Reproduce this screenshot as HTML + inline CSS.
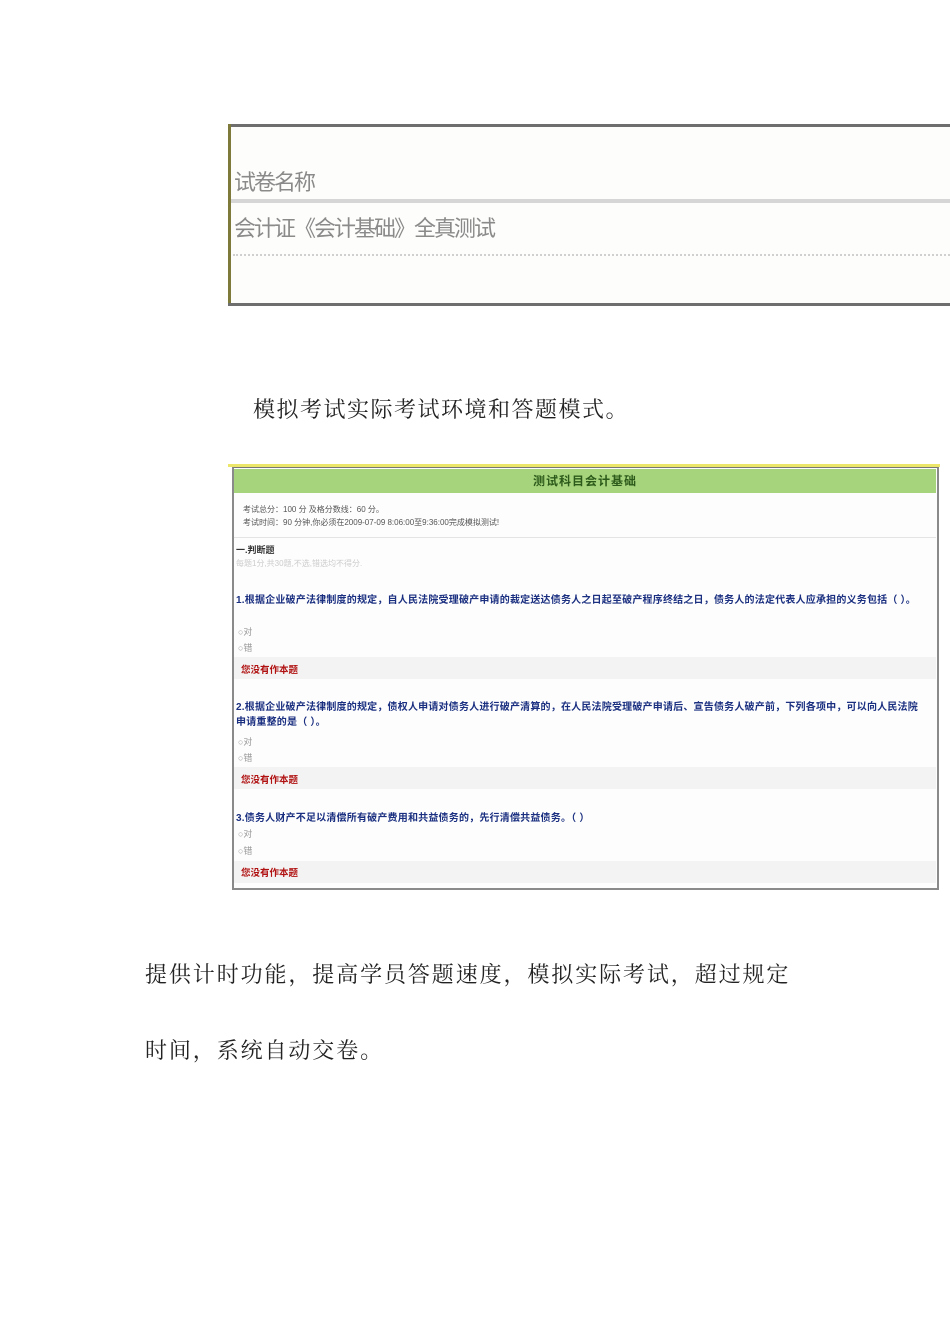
<!DOCTYPE html>
<html><head><meta charset="utf-8"><style>
body{margin:0;width:950px;height:1344px;background:#fff;position:relative;overflow:hidden;font-family:"Liberation Serif","Noto Serif CJK SC",serif;}
.a{position:absolute;white-space:nowrap;}
.s{font-family:"Liberation Sans","Noto Sans CJK SC",sans-serif;}
.q{color:#1a2f80;font-weight:bold;font-size:10px;letter-spacing:0.2px;}
.o{color:#999;font-size:9px;}
.r{color:#b01010;font-weight:bold;font-size:9.5px;}
.band{position:absolute;left:234px;width:702px;height:22px;background:#f3f3f3;}
</style></head><body>
<div class="a" style="left:228px;top:124px;width:722px;height:182px;background:#fdfdfb;"></div>
<div class="a" style="left:228px;top:124px;width:722px;height:3px;background:#6e6e6e;"></div>
<div class="a" style="left:228px;top:124px;width:3px;height:182px;background:#7d7a3a;"></div>
<div class="a" style="left:228px;top:303px;width:722px;height:3px;background:#6e6e6e;"></div>
<div class="a" style="left:231px;top:199px;width:719px;height:4px;background:#d6d6d6;"></div>
<div class="a" style="left:233px;top:254px;width:717px;border-top:2px dotted #d0d0d0;"></div>
<div class="a s" style="left:234px;top:165px;font-size:22px;color:#8a8a8a;letter-spacing:-2px;">试卷名称</div>
<div class="a s" style="left:234px;top:211px;font-size:22px;color:#8a8a8a;letter-spacing:-2px;">会计证《会计基础》全真测试</div>

<div class="a" style="left:253px;top:393px;font-size:22px;color:#222;letter-spacing:1.5px;">模拟考试实际考试环境和答题模式。</div>

<div class="a" style="left:228px;top:464px;width:712px;height:3px;background:#ece66a;"></div>
<div class="a" style="left:232px;top:467px;width:703px;height:420px;border:2px solid #8a8a8a;border-top:1px solid #777;background:#fdfdfd;"></div>
<div class="a s" style="left:234px;top:469px;width:702px;height:24px;background:#a6d47c;text-align:center;line-height:24px;font-size:12px;font-weight:bold;color:#2c5a1a;letter-spacing:1px;">测试科目会计基础</div>
<div class="a s" style="left:243px;top:503px;font-size:8px;color:#555;line-height:13px;">考试总分：100 分 及格分数线：60 分。<br>考试时间：90 分钟,你必须在2009-07-09 8:06:00至9:36:00完成模拟测试!</div>
<div class="a" style="left:234px;top:537px;width:702px;height:1px;background:#e4e4e4;"></div>
<div class="a s" style="left:236px;top:543px;font-size:9px;font-weight:bold;color:#333;">一.判断题</div>
<div class="a s" style="left:236px;top:558px;font-size:8px;color:#ccc;">每题1分,共30题,不选,错选均不得分.</div>
<div class="a s q" style="left:236px;top:591px;">1.根据企业破产法律制度的规定，自人民法院受理破产申请的裁定送达债务人之日起至破产程序终结之日，债务人的法定代表人应承担的义务包括（ ）。</div>
<div class="a s o" style="left:238px;top:625px;">○对</div>
<div class="a s o" style="left:238px;top:641px;">○错</div>
<div class="band" style="top:657px;"></div>
<div class="a s r" style="left:241px;top:662px;">您没有作本题</div>
<div class="a s q" style="left:236px;top:700px;line-height:15px;">2.根据企业破产法律制度的规定，债权人申请对债务人进行破产清算的，在人民法院受理破产申请后、宣告债务人破产前，下列各项中，可以向人民法院<br>申请重整的是（ ）。</div>
<div class="a s o" style="left:238px;top:735px;">○对</div>
<div class="a s o" style="left:238px;top:751px;">○错</div>
<div class="band" style="top:767px;"></div>
<div class="a s r" style="left:241px;top:772px;">您没有作本题</div>
<div class="a s q" style="left:236px;top:809px;">3.债务人财产不足以清偿所有破产费用和共益债务的，先行清偿共益债务。（ ）</div>
<div class="a s o" style="left:238px;top:827px;">○对</div>
<div class="a s o" style="left:238px;top:844px;">○错</div>
<div class="band" style="top:861px;"></div>
<div class="a s r" style="left:241px;top:865px;">您没有作本题</div>

<div class="a" style="left:145px;top:958px;font-size:22px;color:#222;letter-spacing:1.9px;">提供计时功能，提高学员答题速度，模拟实际考试，超过规定</div>
<div class="a" style="left:145px;top:1034px;font-size:22px;color:#222;letter-spacing:1.9px;">时间，系统自动交卷。</div>
</body></html>
